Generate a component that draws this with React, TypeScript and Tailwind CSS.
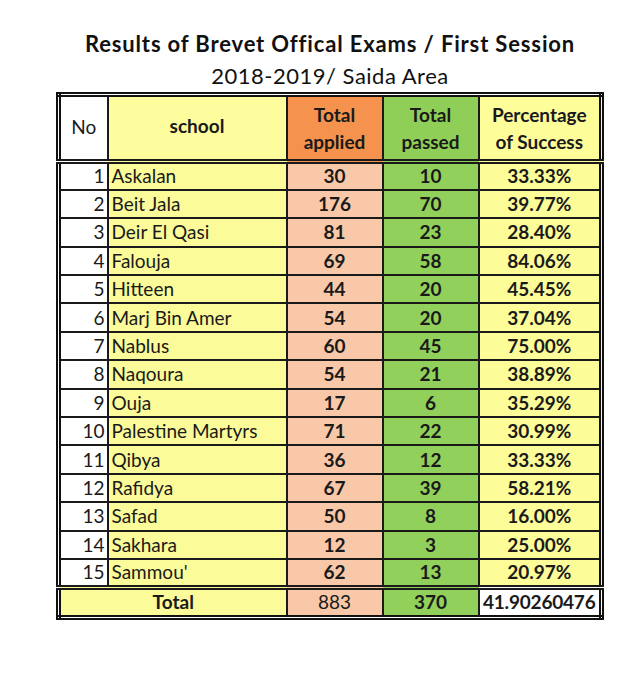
import React from "react";

const rows: [number, string, number, number, string][] = [
  [1, "Askalan", 30, 10, "33.33%"],
  [2, "Beit Jala", 176, 70, "39.77%"],
  [3, "Deir El Qasi", 81, 23, "28.40%"],
  [4, "Falouja", 69, 58, "84.06%"],
  [5, "Hitteen", 44, 20, "45.45%"],
  [6, "Marj Bin Amer", 54, 20, "37.04%"],
  [7, "Nablus", 60, 45, "75.00%"],
  [8, "Naqoura", 54, 21, "38.89%"],
  [9, "Ouja", 17, 6, "35.29%"],
  [10, "Palestine Martyrs", 71, 22, "30.99%"],
  [11, "Qibya", 36, 12, "33.33%"],
  [12, "Rafidya", 67, 39, "58.21%"],
  [13, "Safad", 50, 8, "16.00%"],
  [14, "Sakhara", 12, 3, "25.00%"],
  [15, "Sammou'", 62, 13, "20.97%"],
];

const dbl = { borderBottomStyle: "double" as const };
const dblTop = { borderTopStyle: "double" as const };

export default function App() {
  return (
    <div
      className="w-[644px] h-[689px] bg-white text-[#1a1a1a] overflow-hidden"
      style={{ fontFamily: "Lato, 'Open Sans', sans-serif" }}
    >
      <div className="pt-[30px] pl-[16px] flex flex-col items-center">
        <div className="text-[22px] font-bold leading-[28px] tracking-[0.85px] text-[#111]">
          Results of Brevet Offical Exams / First Session
        </div>
        <div className="text-[22px] leading-[28px] mt-[4px] tracking-[0.5px] text-[#111]">
          2018-2019/ Saida Area
        </div>
      </div>
      <div className="ml-[56px] mt-[2px] w-[548px]">
        <table className="w-[548px] table-fixed border-collapse border-[5px] border-double border-[#111] text-[19px]">
          <colgroup>
            <col className="w-[49px]" />
            <col className="w-[179px]" />
            <col className="w-[96px]" />
            <col className="w-[96px]" />
            <col />
          </colgroup>
          <thead>
            <tr className="h-[67px]">
              <th className="bg-white font-normal border-2 border-[#1a1a1a] border-b-[5px] text-center leading-[27px] pb-[3px]" style={dbl}>
                No
              </th>
              <th className="bg-[#fdfd9e] font-bold border-2 border-[#1a1a1a] border-b-[5px] text-center pb-[3px]" style={dbl}>
                school
              </th>
              <th className="bg-[#f5924d] font-bold border-2 border-[#1a1a1a] border-b-[5px] text-center leading-[27px]" style={dbl}>
                Total
                <br />
                applied
              </th>
              <th className="bg-[#8fcf58] font-bold border-2 border-[#1a1a1a] border-b-[5px] text-center leading-[27px]" style={dbl}>
                Total
                <br />
                passed
              </th>
              <th className="bg-[#fdfd9a] font-bold border-2 border-[#1a1a1a] border-b-[5px] text-center leading-[27px]" style={dbl}>
                Percentage
                <br />
                of Success
              </th>
            </tr>
          </thead>
          <tbody>
            {rows.map(([n, s, a, p, pct]) => (
              <tr key={n} className="h-[28.4px] leading-[22px]">
                <td className="bg-white border-2 border-[#1a1a1a] text-right pr-[2px] py-0">{n}</td>
                <td className="bg-[#fbfb99] border-2 border-[#1a1a1a] text-left pl-[3px] py-0 whitespace-nowrap">{s}</td>
                <td className="bg-[#f8c8a8] border-2 border-[#1a1a1a] text-center font-bold py-0">{a}</td>
                <td className="bg-[#92d05c] border-2 border-[#1a1a1a] text-center font-bold py-0">{p}</td>
                <td className="bg-[#fcfc99] border-2 border-[#1a1a1a] text-center font-bold py-0">{pct}</td>
              </tr>
            ))}
            <tr className="h-[30px] leading-[22px]">
              <td colSpan={2} className="bg-[#fbfb99] border-2 border-[#1a1a1a] border-t-[5px] text-center font-bold" style={dblTop}>
                Total
              </td>
              <td className="bg-[#f8c8a8] border-2 border-[#1a1a1a] border-t-[5px] text-center" style={dblTop}>
                883
              </td>
              <td className="bg-[#92d05c] border-2 border-[#1a1a1a] border-t-[5px] text-center font-bold" style={dblTop}>
                370
              </td>
              <td className="bg-white border-2 border-[#1a1a1a] border-t-[5px] text-center font-bold tracking-[-0.2px] px-0" style={dblTop}>
                41.90260476
              </td>
            </tr>
          </tbody>
        </table>
      </div>
    </div>
  );
}
